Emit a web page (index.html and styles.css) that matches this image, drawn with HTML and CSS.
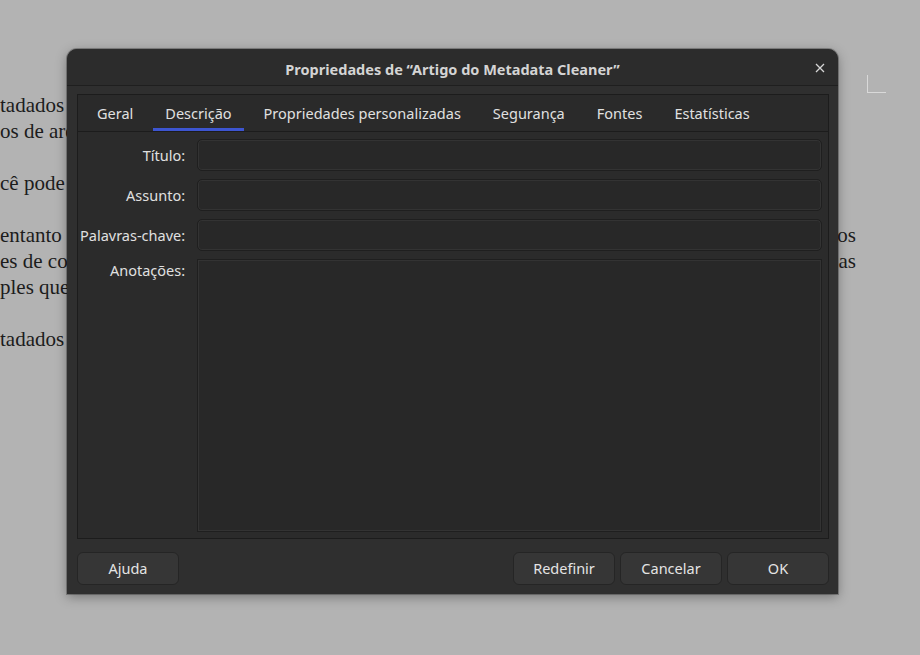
FILE: index.html
```html
<html>
    <head>
        <title>Propriedades de “Artigo do Metadata Cleaner”</title>
        <meta charset="UTF-8">
        <link rel="stylesheet" href="styles.css">
    </head>
    <body>
        <div class="document">
            <p class="line"><span>tadados</span></p>
            <p class="line"><span>os de arq</span></p>
            <p class="gap"></p>
            <p class="line"><span>cê pode</span></p>
            <p class="gap"></p>
            <p class="line"><span>entanto</span><span>os</span></p>
            <p class="line"><span>es de co</span><span>as</span></p>
            <p class="line"><span>ples que</span></p>
            <p class="gap"></p>
            <p class="line"><span>tadados</span></p>
        </div>
        <div class="page-corner"></div>

        <div class="dialog">
            <div class="titlebar">
                <span class="title">Propriedades de “Artigo do Metadata Cleaner”</span>
                <span class="close">
                    <svg width="10" height="10" viewBox="0 0 10 10"><path d="M1 1 L9 9 M9 1 L1 9" stroke="#d6d6d6" stroke-width="1.3" fill="none"/></svg>
                </span>
            </div>
            <div class="dialog-body">
                <div class="notebook">
                    <div class="tabs">
                        <div class="tab">Geral</div>
                        <div class="tab active">Descrição</div>
                        <div class="tab">Propriedades personalizadas</div>
                        <div class="tab">Segurança</div>
                        <div class="tab">Fontes</div>
                        <div class="tab">Estatísticas</div>
                    </div>
                    <div class="tab-page">
                        <label class="field-label">Título:</label>
                        <div class="entry"></div>
                        <label class="field-label">Assunto:</label>
                        <div class="entry"></div>
                        <label class="field-label">Palavras-chave:</label>
                        <div class="entry"></div>
                        <label class="field-label top">Anotações:</label>
                        <div class="entry textarea"></div>
                    </div>
                </div>
                <div class="buttons">
                    <button class="btn">Ajuda</button>
                    <div class="button-group">
                        <button class="btn">Redefinir</button>
                        <button class="btn">Cancelar</button>
                        <button class="btn">OK</button>
                    </div>
                </div>
            </div>
        </div>
    </body>
</html>
```

FILE: styles.css
```css
body {
    margin: 0;
    width: 920px;
    height: 655px;
    overflow: hidden;
    position: relative;
    background-color: #b3b3b3;
}
.document {
    width: 856px;
    padding-top: 92px;
    font-family: 'Liberation Serif', serif;
    font-size: 21px;
    line-height: 26px;
    color: #1c1c1c;
}
.document p {
    margin: 0;
    height: 26px;
    white-space: nowrap;
}
.document .line {
    display: flex;
    justify-content: space-between;
}
.page-corner {
    position: absolute;
    left: 867px;
    top: 75px;
    width: 18px;
    height: 17px;
    border-left: 1px solid #d9d9d9;
    border-bottom: 1px solid #d9d9d9;
}
.dialog {
    position: absolute;
    left: 67px;
    top: 49px;
    width: 771px;
    height: 545px;
    background-color: #2f2f2f;
    border-radius: 10px 10px 0 0;
    box-shadow: 0 3px 12px rgba(0,0,0,0.35), 0 0 0 1px rgba(0,0,0,0.25);
    display: flex;
    flex-direction: column;
    font-family: 'Noto Sans', sans-serif;
    font-size: 14.5px;
    color: #e2e2e2;
}
.titlebar {
    height: 36px;
    flex: none;
    border-bottom: 1px solid #1f1f1f;
    border-radius: 10px 10px 0 0;
    background-color: #2c2c2c;
    display: flex;
    align-items: center;
    justify-content: center;
    position: relative;
}
.title {
    font-weight: bold;
    color: #d4d4d4;
    padding-top: 3px;
}
.close {
    position: absolute;
    right: 13px;
    top: 14px;
    display: flex;
}
.dialog-body {
    flex: 1;
    display: flex;
    flex-direction: column;
    padding: 8px 9px 9px 10px;
}
.notebook {
    height: 443px;
    border: 1px solid #1c1c1c;
    display: flex;
    flex-direction: column;
    background-color: #2b2b2b;
}
.tabs {
    height: 36px;
    flex: none;
    display: flex;
    padding-left: 3px;
    border-bottom: 1px solid #1c1c1c;
    background-color: #2a2a2a;
}
.tab {
    padding: 0 16px;
    display: flex;
    align-items: center;
    position: relative;
    color: #e0e0e0;
    white-space: nowrap;
}
.tab.active::after {
    content: '';
    position: absolute;
    left: 4px;
    right: 4px;
    bottom: 0;
    height: 3px;
    background-color: #3d55d0;
}
.tab-page {
    flex: 1;
    display: grid;
    grid-template-columns: auto 1fr;
    grid-template-rows: 32px 32px 32px 1fr;
    column-gap: 9px;
    row-gap: 8px;
    padding: 7px 6px 6px 2px;
}
.field-label {
    text-align: right;
    align-self: center;
    padding-right: 3px;
    color: #e0e0e0;
}
.field-label.top {
    align-self: start;
    padding-top: 1px;
}
.entry {
    background-color: #282828;
    border: 1px solid #1f1f1f;
    border-radius: 5px;
    box-shadow: inset 0 0 0 1px #333333;
}
.entry.textarea {
    border-radius: 0;
}
.buttons {
    display: flex;
    padding-top: 13px;
}
.button-group {
    margin-left: auto;
    display: flex;
    gap: 5px;
}
.btn {
    width: 102px;
    height: 33px;
    background-color: #363636;
    border: 1px solid #252525;
    border-radius: 6px;
    color: #e4e4e4;
    font-family: 'Noto Sans', sans-serif;
    font-size: 14.5px;
    padding: 0 0 2px;
}
```
